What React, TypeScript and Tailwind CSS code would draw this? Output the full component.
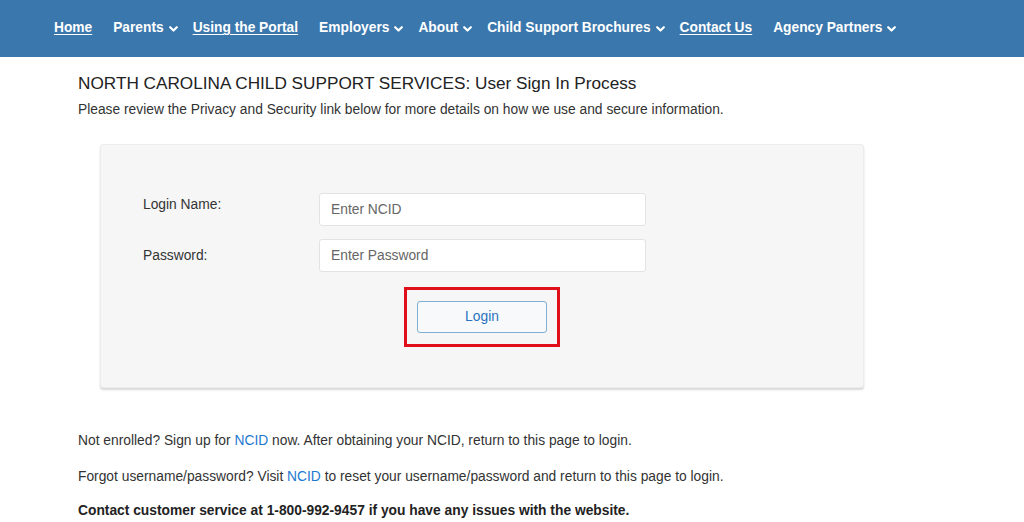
import React from 'react';

const navItems: { label: string; link?: boolean; menu?: boolean }[] = [
  { label: 'Home', link: true },
  { label: 'Parents', menu: true },
  { label: 'Using the Portal', link: true },
  { label: 'Employers', menu: true },
  { label: 'About', menu: true },
  { label: 'Child Support Brochures', menu: true },
  { label: 'Contact Us', link: true },
  { label: 'Agency Partners', menu: true },
];

function Caret() {
  return (
    <svg width="9" height="6" viewBox="0 0 9 6" className="mt-[1px]">
      <polyline points="1.2,1.2 4.5,4.5 7.8,1.2" fill="none" stroke="white" strokeWidth="2.2" strokeLinecap="round" strokeLinejoin="round" />
    </svg>
  );
}

export default function App() {
  return (
    <div className="min-h-[522px] bg-white font-['Liberation_Sans',Arial,sans-serif] text-[#333]">
      {/* top nav */}
      <nav className="h-[57px] bg-[#3a77ad] flex items-center pl-[54px] gap-[15px] text-white text-[13.75px] font-bold">
        {navItems.map((item) => (
          <span key={item.label} className={`flex items-center gap-[5px] ${item.link ? 'mr-[6px]' : ''}`}>
            <span className={item.link ? 'underline underline-offset-2' : ''}>{item.label}</span>
            {item.menu && <Caret />}
          </span>
        ))}
      </nav>

      <main className="pl-[78px] pt-[15px]">
        <h1 className="text-[17.2px] leading-[22px] text-[#222]">
          NORTH CAROLINA CHILD SUPPORT SERVICES: User Sign In Process
        </h1>
        <p className="mt-[7px] text-[13.8px] leading-[18px] text-[#333]">
          Please review the Privacy and Security link below for more details on how we use and secure information.
        </p>

        {/* login panel */}
        <div className="ml-[22px] mt-[25px] w-[764px] h-[244px] bg-[#f6f6f6] border border-[#ececec] rounded-[3px] shadow-[0_2px_2px_rgba(0,0,0,0.15)] pt-[48px]">
          <div className="flex items-center">
            <label className="w-[218px] pl-[42px] text-[13.8px] text-[#333] -mt-[9px]">Login Name:</label>
            <input
              placeholder="Enter NCID"
              className="w-[327px] h-[33px] bg-white border border-[#e3e3e3] rounded-[3px] px-[11px] text-[13.8px] placeholder:text-[#666] outline-none"
            />
          </div>
          <div className="flex items-center mt-[13px]">
            <label className="w-[218px] pl-[42px] text-[13.8px] text-[#333] mt-[2px]">Password:</label>
            <input
              placeholder="Enter Password"
              className="w-[327px] h-[33px] bg-white border border-[#e3e3e3] rounded-[3px] px-[11px] text-[13.8px] placeholder:text-[#666] outline-none"
            />
          </div>
          <div className="flex justify-center mt-[15px]">
            <div className="border-[3px] border-[#e0101b] px-[10px] pt-[11px] pb-[11px]">
              <button className="w-[130px] h-[32px] bg-[#f8f9fa] border border-[#7fb0d4] rounded-[3px] text-[#2a73c0] text-[13.8px]">
                Login
              </button>
            </div>
          </div>
        </div>

        <div className="mt-[44px] text-[13.8px] text-[#333] leading-[18px]">
          <p>
            Not enrolled? Sign up for <span className="text-[#1e78d0]">NCID</span> now. After obtaining your NCID, return to this page to login.
          </p>
          <p className="mt-[18px]">
            Forgot username/password? Visit <span className="text-[#1e78d0]">NCID</span> to reset your username/password and return to this page to login.
          </p>
          <p className="mt-[16px] font-bold text-[#222]">
            Contact customer service at 1-800-992-9457 if you have any issues with the website.
          </p>
        </div>
      </main>
    </div>
  );
}
